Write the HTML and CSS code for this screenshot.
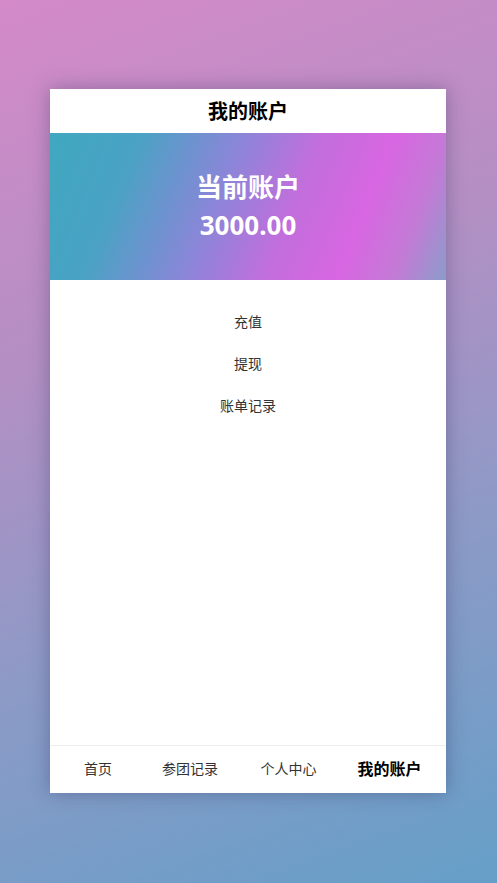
FILE: index.html
```html
<!DOCTYPE html>
<html lang="zh-CN">
<head>
<meta charset="utf-8">
<title>我的账户</title>
<link rel="stylesheet" href="styles.css">
</head>
<body>
<div class="page">
  <div class="card">
    <header class="topbar">我的账户</header>
    <section class="banner">
      <div class="banner-label">当前账户</div>
      <div class="banner-amount">3000.00</div>
    </section>
    <ul class="menu">
      <li class="menu-item">充值</li>
      <li class="menu-item">提现</li>
      <li class="menu-item">账单记录</li>
    </ul>
    <nav class="tabbar">
      <span class="tab">首页</span>
      <span class="tab">参团记录</span>
      <span class="tab">个人中心</span>
      <span class="tab tab-active">我的账户</span>
    </nav>
  </div>
</div>
</body>
</html>
```

FILE: styles.css
```css
* { box-sizing: border-box; }
html, body {
  margin: 0;
  padding: 0;
  height: 100%;
}
body {
  font-family: "Noto Sans", "Noto Sans CJK SC", sans-serif;
  background: linear-gradient(160deg, #d48ac8 0%, #b48fc4 35%, #8d9ac6 65%, #659fc8 100%);
  color: #333;
}
.page {
  height: 883px;
  padding-top: 89px;
  display: flex;
  justify-content: center;
}
.card {
  width: 396px;
  height: 704px;
  margin-right: 1px;
  background: #fff;
  display: flex;
  flex-direction: column;
  box-shadow: 0 0 18px rgba(40, 40, 80, 0.35);
}
.topbar {
  height: 44px;
  padding-bottom: 2px;
  display: flex;
  align-items: center;
  justify-content: center;
  font-size: 20px;
  font-weight: 700;
  color: #000;
}
.banner {
  height: 147px;
  display: flex;
  flex-direction: column;
  align-items: center;
  justify-content: center;
  color: #fff;
  font-weight: 700;
  font-size: 26px;
  line-height: 38px;
  padding-bottom: 1px;
  background: linear-gradient(112deg, #40a8c0 0%, #4aa2c4 20%, #8a86d8 42%, #c26edc 60%, #d866e2 76%, #c47ad6 88%, #8b9cca 100%);
}
.menu {
  list-style: none;
  margin: 0;
  padding: 21px 0 0;
  flex: 1;
}
.menu-item {
  height: 42px;
  line-height: 42px;
  text-align: center;
  font-size: 14px;
  color: #333;
}
.tabbar {
  height: 48px;
  padding-bottom: 3px;
  border-top: 1px solid #eeeeee;
  display: grid;
  grid-template-columns: 96px 88px 109px 93px;
  align-items: center;
}
.tab {
  text-align: center;
  font-size: 14px;
  color: #333;
}
.tab-active {
  font-size: 16px;
  font-weight: 700;
  color: #000;
}
```
